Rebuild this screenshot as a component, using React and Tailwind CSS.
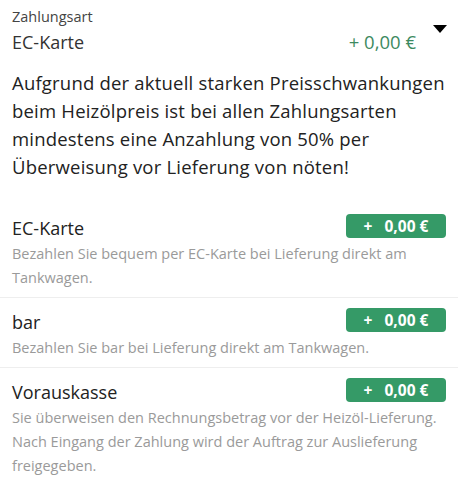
import React from "react";

const options = [
  {
    name: "EC-Karte",
    lines: ["Bezahlen Sie bequem per EC-Karte bei Lieferung direkt am", "Tankwagen."],
  },
  {
    name: "bar",
    lines: ["Bezahlen Sie bar bei Lieferung direkt am Tankwagen."],
  },
  {
    name: "Vorauskasse",
    lines: [
      "Sie überweisen den Rechnungsbetrag vor der Heizöl-Lieferung.",
      "Nach Eingang der Zahlung wird der Auftrag zur Auslieferung",
      "freigegeben.",
    ],
  },
];

const notice = [
  "Aufgrund der aktuell starken Preisschwankungen",
  "beim Heizölpreis ist bei allen Zahlungsarten",
  "mindestens eine Anzahlung von 50% per",
  "Überweisung vor Lieferung von nöten!",
];

function App() {
  return (
    <div
      className="bg-white w-[458px] h-[480px] overflow-hidden text-[#222]"
      style={{ fontFamily: '"Open Sans", "Noto Sans", sans-serif' }}
    >
      <div className="relative px-3 pt-[7px]">
        <div className="text-[14.5px] leading-[20px] text-[#444]">Zahlungsart</div>
        <div className="flex items-center justify-between pr-[30px]">
          <span className="text-[18px] leading-[30px] text-[#333]">EC-Karte</span>
          <span className="text-[18.5px] leading-[30px] text-[#3d8a5f]">+ 0,00 €</span>
        </div>
        <div className="absolute right-[11px] top-[25px] w-0 h-0 border-l-[7px] border-r-[7px] border-t-[8px] border-l-transparent border-r-transparent border-t-black" />
      </div>

      <p className="px-3 mt-[12px] mb-[23px] text-[18.5px] leading-[28px] tracking-[0.2px] text-[#222] whitespace-nowrap">
        {notice.map((l) => (
          <span key={l} className="block">
            {l}
          </span>
        ))}
      </p>

      <div>
        {options.map((o, i) => (
          <div
            key={o.name}
            className={
              "px-3 pt-[10px] pb-[7px] " +
              (i < options.length - 1 ? "border-b border-[#eeeeee]" : "")
            }
          >
            <div className="flex items-start justify-between">
              <span className="text-[18px] leading-[28px] text-[#222]">{o.name}</span>
              <span className="flex items-center justify-center gap-[12px] bg-[#359a67] text-white font-bold text-[15.5px] leading-[24px] w-[100px] rounded-[4px]">
                <span>+</span>
                <span>0,00 €</span>
              </span>
            </div>
            <p className="text-[14.5px] leading-[24px] text-[#9a9a9a] whitespace-nowrap">
              {o.lines.map((l) => (
                <span key={l} className="block">
                  {l}
                </span>
              ))}
            </p>
          </div>
        ))}
      </div>
    </div>
  );
}

export default App;
